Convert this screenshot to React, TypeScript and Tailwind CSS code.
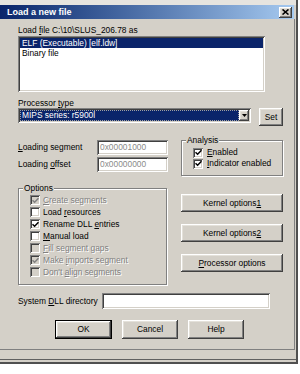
import React from "react";

const raised =
  "shadow-[inset_-1px_-1px_#404040,inset_1px_1px_#ffffff,inset_-2px_-2px_#808080,inset_2px_2px_#e4e1da]";
const sunken =
  "shadow-[inset_1px_1px_#808080,inset_-1px_-1px_#ffffff,inset_2px_2px_#404040,inset_-2px_-2px_#d4d0c8]";
const etched = "border border-[#808080] shadow-[inset_1px_1px_#ffffff,1px_1px_#ffffff]";

function Check({ checked, disabled }: { checked?: boolean; disabled?: boolean }) {
  return (
    <span
      className={`w-[10px] h-[10px] flex-none flex items-center justify-center ${sunken} ${
        disabled ? "bg-[#d4d0c8]" : "bg-white"
      }`}
    >
      {checked && (
        <svg width="7" height="7" viewBox="0 0 7 7">
          <path
            d="M0.5 3.2 L2.6 5.3 L6.5 1.2"
            stroke={disabled ? "#808080" : "#000000"}
            strokeWidth="1.5"
            fill="none"
          />
        </svg>
      )}
    </span>
  );
}

function Opt({
  checked,
  disabled,
  children,
}: {
  checked?: boolean;
  disabled?: boolean;
  children: React.ReactNode;
}) {
  return (
    <div className="flex items-center gap-[3px] h-[12px]">
      <Check checked={checked} disabled={disabled} />
      <span
        className={
          disabled
            ? "text-[#808080] [text-shadow:1px_1px_0_#ffffff] leading-[12px]"
            : "text-black leading-[12px]"
        }
      >
        {children}
      </span>
    </div>
  );
}

function Btn({ w, children }: { w: string; children: React.ReactNode }) {
  return (
    <div
      className={`${w} h-[19px] bg-[#d4d0c8] flex items-center justify-center text-black ${raised}`}
    >
      {children}
    </div>
  );
}

export default function App() {
  return (
    <div className="w-[300px] h-[374px] bg-white overflow-hidden font-['Liberation_Sans',Arial,sans-serif] text-[8.4px] text-black">
      <div className="w-[298px] bg-[#d4d0c8] border-r-2 border-r-[#505050]">
        <div className="h-[5px] bg-[#e6e4df]" />
        {/* title bar */}
        <div className="w-[294px] h-[14px] bg-gradient-to-r from-[#0a246a] to-[#a6caf0] flex items-center justify-between pl-[7px] pr-[2px]">
          <span className="text-white font-bold text-[9px] leading-[14px]">Load a new file</span>
          <div className={`w-[13px] h-[11px] bg-[#d4d0c8] flex items-center justify-center ${raised}`}>
            <svg width="7" height="6" viewBox="0 0 7 6">
              <path d="M0.5 0.5 L6.5 5.5 M6.5 0.5 L0.5 5.5" stroke="#000" strokeWidth="1.6" />
            </svg>
          </div>
        </div>
        {/* content */}
        <div className="w-[295px] h-[331px] border-r border-b border-[#808080] pl-[18px] pt-[6px] flex flex-col">
          <div className="h-[11px] leading-[11px]">
            Load <span className="underline">f</span>ile C:\10\SLUS_206.78 as
          </div>
          <div className={`w-[247px] h-[56px] bg-white p-[2px] ${sunken}`}>
            <div className="h-[10px] leading-[10px] bg-[#0a246a] text-white pl-[2px]">
              ELF (Executable) [elf.ldw]
            </div>
            <div className="h-[10px] leading-[10px] pl-[2px]">Binary file</div>
          </div>
          <div className="mt-[6px] h-[10px] leading-[10px]">
            Processor <span className="underline">t</span>ype
          </div>
          <div className="flex items-start">
            <div className={`w-[233px] h-[15px] bg-white p-[2px] flex ${sunken}`}>
              <div className="flex-1 bg-[#0a246a] text-white leading-[11px] pl-[2px] outline outline-1 outline-dotted outline-[#a0a0a0] -outline-offset-1">
                MIPS series: r5900l
              </div>
              <div className={`w-[10px] h-[11px] bg-[#d4d0c8] flex items-center justify-center ${raised}`}>
                <svg width="5" height="3" viewBox="0 0 5 3">
                  <path d="M0 0 H5 L2.5 3 Z" fill="#000" />
                </svg>
              </div>
            </div>
            <div className={`ml-[8px] w-[24px] h-[18px] bg-[#d4d0c8] flex items-center justify-center ${raised}`}>
              Set
            </div>
          </div>

          {/* row: loading + analysis */}
          <div className="mt-[14px] flex">
            <div className="w-[163px] flex flex-col gap-[2px]">
              <div className="flex items-center h-[15px]">
                <span className="w-[79px]">
                  <span className="underline">L</span>oading segment
                </span>
                <div className={`w-[71px] h-[15px] bg-white pl-[3px] leading-[15px] text-[#8a8a8a] ${sunken}`}>
                  0x00001000
                </div>
              </div>
              <div className="flex items-center h-[15px]">
                <span className="w-[79px]">
                  Loading <span className="underline">o</span>ffset
                </span>
                <div className={`w-[71px] h-[15px] bg-white pl-[3px] leading-[15px] text-[#8a8a8a] ${sunken}`}>
                  0x00000000
                </div>
              </div>
            </div>
            <div className={`relative w-[102px] h-[36px] pt-[6px] pl-[11px] flex flex-col ${etched}`}>
              <span className="absolute left-[4px] top-[-6px] bg-[#d4d0c8] px-[1px] leading-[10px]">
                Analysis
              </span>
              <div className="flex items-center gap-[4px] h-[11px]">
                <Check checked />
                <span>
                  <span className="underline">E</span>nabled
                </span>
              </div>
              <div className="flex items-center gap-[4px] h-[11px]">
                <Check checked />
                <span>
                  <span className="underline">I</span>ndicator enabled
                </span>
              </div>
            </div>
          </div>

          {/* row: options + buttons */}
          <div className="mt-[12px] flex">
            <div className={`relative w-[149px] h-[97px] pt-[5px] pl-[11px] flex flex-col ${etched}`}>
              <span className="absolute left-[4px] top-[-6px] bg-[#d4d0c8] px-[1px] leading-[10px]">
                Options
              </span>
              <Opt checked disabled>
                <span className="underline">C</span>reate segments
              </Opt>
              <Opt>
                Load <span className="underline">r</span>esources
              </Opt>
              <Opt checked>
                Rename DLL <span className="underline">e</span>ntries
              </Opt>
              <Opt>
                <span className="underline">M</span>anual load
              </Opt>
              <Opt disabled>
                <span className="underline">F</span>ill segment gaps
              </Opt>
              <Opt checked disabled>
                Make <span className="underline">i</span>mports segment
              </Opt>
              <Opt disabled>
                Don't <span className="underline">a</span>lign segments
              </Opt>
            </div>
            <div className="ml-[14px] pt-[6px] flex flex-col gap-[12px]">
              <div className={`w-[102px] h-[18px] bg-[#d4d0c8] flex items-center justify-center ${raised}`}>
                <span>
                  Kernel options<span className="underline">1</span>
                </span>
              </div>
              <div className={`w-[102px] h-[18px] bg-[#d4d0c8] flex items-center justify-center ${raised}`}>
                <span>
                  Kernel options<span className="underline">2</span>
                </span>
              </div>
              <div className={`w-[102px] h-[18px] bg-[#d4d0c8] flex items-center justify-center ${raised}`}>
                <span>
                  <span className="underline">P</span>rocessor options
                </span>
              </div>
            </div>
          </div>

          {/* system dll */}
          <div className="mt-[8px] flex items-center h-[16px]">
            <span className="w-[84px]">
              System <span className="underline">D</span>LL directory
            </span>
            <div className={`w-[168px] h-[16px] bg-white ${sunken}`} />
          </div>

          {/* buttons */}
          <div className="mt-[11px] ml-[37px] flex gap-[10px]">
            <div className="w-[57px] h-[19px] border border-black">
              <div className={`w-full h-full bg-[#d4d0c8] flex items-center justify-center ${raised}`}>
                OK
              </div>
            </div>
            <Btn w="w-[56px]">Cancel</Btn>
            <Btn w="w-[56px]">Help</Btn>
          </div>
        </div>
        <div className="h-[9px]" />
        <div className="h-[1px] bg-[#606060]" />
        <div className="h-[2px] bg-[#d4d0c8]" />
        <div className="h-[2px] bg-[#505050]" />
      </div>
    </div>
  );
}
